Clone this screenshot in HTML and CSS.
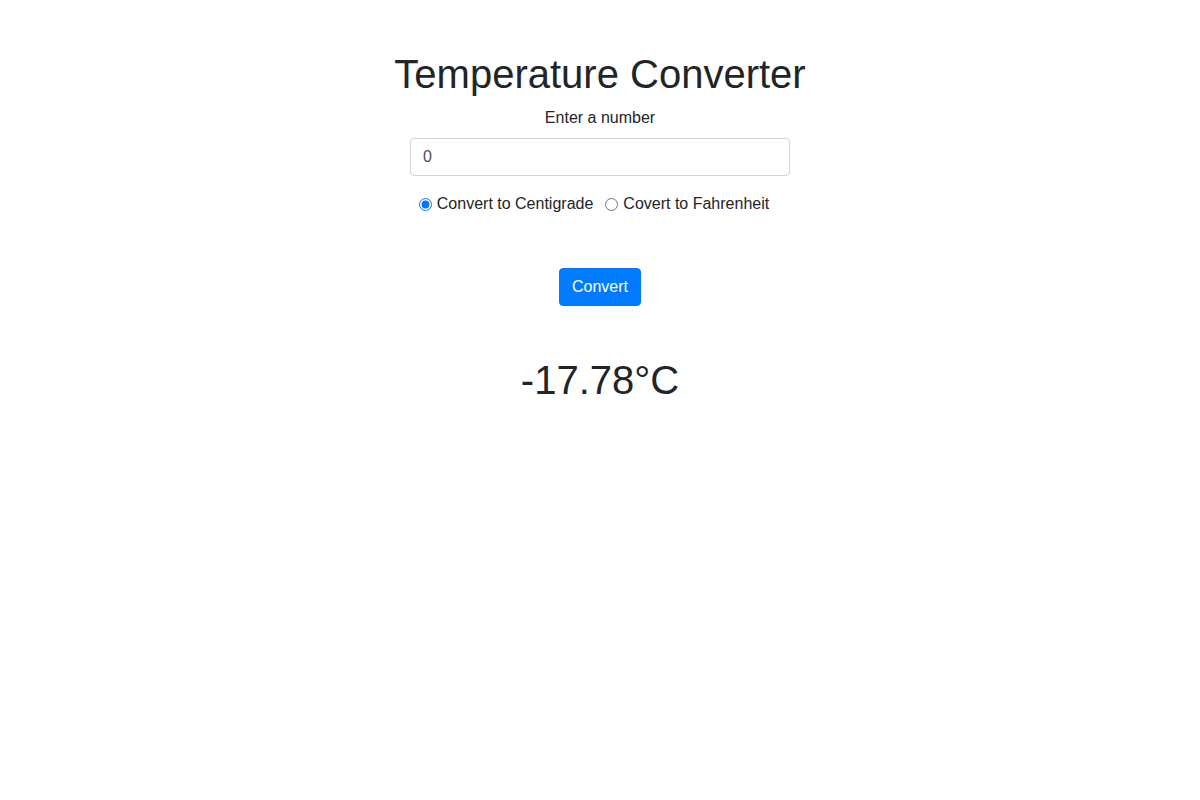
FILE: index.html
```html
<!DOCTYPE html>
<html>
<head>
<meta charset="utf-8">
<link rel="stylesheet" href="styles.css">
</head>
<body>
<main class="app">
  <h1 class="title">Temperature Converter</h1>
  <label class="label" for="num">Enter a number</label>
  <input class="field" id="num" type="text" value="0">
  <div class="radios">
    <label class="check"><input type="radio" name="mode" checked> Convert to Centigrade</label>
    <label class="check"><input type="radio" name="mode"> Covert to Fahrenheit</label>
  </div>
  <button class="btn">Convert</button>
  <div class="result">-17.78°C</div>
</main>
</body>
</html>
```
FILE: styles.css
```css
html, body {
  margin: 0;
  background: #fff;
}
body {
  font-family: "Liberation Sans", Arial, sans-serif;
  font-size: 16px;
  line-height: 1.5;
  color: #212529;
}
.app {
  display: flex;
  flex-direction: column;
  align-items: center;
  padding-top: 50px;
}
.title {
  font-size: 40px;
  font-weight: 500;
  line-height: 1.2;
  margin: 0 0 8px;
}
.label {
  display: block;
  margin-bottom: 8px;
}
.field {
  box-sizing: border-box;
  width: 380px;
  height: 38px;
  padding: 6px 12px;
  font-family: inherit;
  font-size: 16px;
  line-height: 1.5;
  color: #495057;
  border: 1px solid #ced4da;
  border-radius: 4px;
  margin: 0 0 16px;
}
.radios {
  display: flex;
  height: 24px;
  align-items: center;
}
.check {
  display: inline-flex;
  align-items: center;
  margin-right: 12px;
}
.check input {
  margin: 0 5px 0 0;
  width: 13px;
  height: 13px;
}
.btn {
  margin-top: 52px;
  font-family: inherit;
  font-size: 16px;
  line-height: 24px;
  padding: 6px 12px;
  color: #fff;
  background: #007bff;
  border: 1px solid #007bff;
  border-radius: 4px;
}
.result {
  margin-top: 50px;
  font-size: 40px;
  font-weight: 500;
  line-height: 1.2;
}
```
